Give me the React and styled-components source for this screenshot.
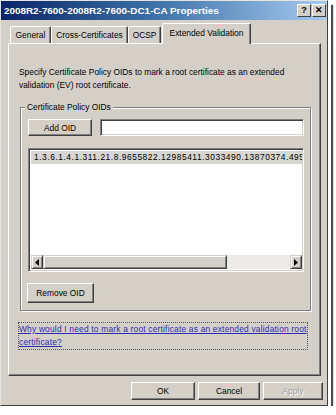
import React from "react";
import styled, { createGlobalStyle } from "styled-components";

const GlobalStyle = createGlobalStyle`
  body {
    margin: 0;
    background: #fff;
    font-family: "Liberation Sans", Arial, sans-serif;
  }
`;

const tabs = [
    { label: "General", w: 41 },
    { label: "Cross-Certificates", w: 77 },
    { label: "OCSP", w: 33 },
    { label: "Extended Validation", w: 89, active: true },
];

const oid =
    "1.3.6.1.4.1.311.21.8.9655822.12985411.3033490.13870374.4953768.95";

const App = () => {
    return (
        <>
            <GlobalStyle />
            <Window>
                <TitleBar>
                    <Title>2008R2-7600-2008R2-7600-DC1-CA Properties</Title>
                    <TitleButtons>
                        <TitleButton>?</TitleButton>
                        <TitleButton>✕</TitleButton>
                    </TitleButtons>
                </TitleBar>

                <TabRow>
                    {tabs.map((t) => (
                        <Tab key={t.label} w={t.w} active={t.active}>
                            {t.label}
                        </Tab>
                    ))}
                </TabRow>

                <Panel>
                    <Description>
                        Specify Certificate Policy OIDs to mark a root certificate as an extended
                        <br />
                        validation (EV) root certificate.
                    </Description>

                    <Group>
                        <Caption>Certificate Policy OIDs</Caption>
                        <AddRow>
                            <Button w={64} h={17}>
                                Add OID
                            </Button>
                            <TextBox />
                        </AddRow>

                        <ListBox>
                            <ListItems>
                                <ListItem>{oid}</ListItem>
                            </ListItems>
                            <HScroll>
                                <ArrowButton>
                                    <svg width="4" height="7" viewBox="0 0 4 7">
                                        <path d="M4 0 L0 3.5 L4 7 Z" fill="#000" />
                                    </svg>
                                </ArrowButton>
                                <Track>
                                    <Thumb />
                                </Track>
                                <ArrowButton>
                                    <svg width="4" height="7" viewBox="0 0 4 7">
                                        <path d="M0 0 L4 3.5 L0 7 Z" fill="#000" />
                                    </svg>
                                </ArrowButton>
                            </HScroll>
                        </ListBox>

                        <Button w={67} h={20} shift={-1}>
                            Remove OID
                        </Button>
                    </Group>

                    <HelpLink>
                        Why would I need to mark a root certificate as an extended validation root
                        <br />
                        certificate?
                    </HelpLink>
                </Panel>

                <Footer>
                    <Button w={64} h={18}>
                        OK
                    </Button>
                    <Button w={62} h={18}>
                        Cancel
                    </Button>
                    <Button w={60} h={18} disabled>
                        Apply
                    </Button>
                </Footer>
            </Window>
        </>
    );
};

export default App;

const Window = styled.div`
    width: 328px;
    height: 406px;
    box-sizing: border-box;
    background: #d4d0c8;
    border: 1px solid;
    border-color: #e6e4de #404040 #404040 #e6e4de;
    box-shadow: 3px 3px 0 #fff, 5px 5px 1px #4a4a4a;
    display: flex;
    flex-direction: column;
    font-size: 8.4px;
    color: #000;
`;

const TitleBar = styled.div`
    height: 19px;
    display: flex;
    align-items: center;
    justify-content: space-between;
    padding: 0 1px 0 3px;
    background: linear-gradient(to right, #0a246a 0%, #3a6ea5 45%, #a6caf0 100%);
`;

const Title = styled.span`
    color: #fff;
    font-weight: bold;
    font-size: 9.9px;
`;

const TitleButtons = styled.div`
    display: flex;
    gap: 1px;
`;

const TitleButton = styled.div`
    width: 12px;
    height: 11px;
    display: flex;
    align-items: center;
    justify-content: center;
    background: #d4d0c8;
    border: 1px solid;
    border-color: #fff #404040 #404040 #fff;
    font-size: 9px;
    font-weight: bold;
    line-height: 1;
`;

const TabRow = styled.div`
    height: 23px;
    display: flex;
    align-items: flex-end;
    padding-left: 9px;
    position: relative;
    z-index: 1;
`;

const Tab = styled.div`
    width: ${(p) => p.w}px;
    height: ${(p) => (p.active ? 21 : 17)}px;
    box-sizing: border-box;
    margin-bottom: ${(p) => (p.active ? -1 : 0)}px;
    margin-left: ${(p) => (p.active ? 1 : 0)}px;
    padding-top: ${(p) => (p.active ? 4 : 3)}px;
    text-align: center;
    background: #d4d0c8;
    border: 1px solid;
    border-bottom: none;
    border-color: #fff #404040 transparent #fff;
    box-shadow: inset -1px 0 0 #808080;
    border-radius: 2px 2px 0 0;
    white-space: nowrap;
`;

const Panel = styled.div`
    width: 313px;
    height: 333px;
    box-sizing: border-box;
    margin-left: 7px;
    border: 1px solid;
    border-color: #fff #404040 #404040 #fff;
    box-shadow: inset -1px -1px 0 #808080;
    padding: 22px 9px 0 11px;
`;

const Description = styled.div`
    line-height: 13px;
    margin-left: -1px;
    white-space: nowrap;
`;

const Group = styled.div`
    position: relative;
    margin-top: 15px;
    height: 204px;
    box-sizing: border-box;
    border: 1px solid #808080;
    box-shadow: inset 1px 1px 0 #fff, 1px 1px 0 #fff;
    padding: 11px 6px 0 7px;
`;

const Caption = styled.span`
    position: absolute;
    top: -6px;
    left: 4px;
    padding: 0 2px;
    background: #d4d0c8;
    line-height: 11px;
`;

const Button = styled.div`
    width: ${(p) => p.w}px;
    height: ${(p) => p.h}px;
    margin-left: ${(p) => p.shift || 0}px;
    box-sizing: border-box;
    display: flex;
    align-items: center;
    justify-content: center;
    background: #d4d0c8;
    border: 1px solid;
    border-color: #fff #404040 #404040 #fff;
    box-shadow: inset -1px -1px 0 #808080;
    color: ${(p) => (p.disabled ? "#a0a0a0" : "#000")};
    text-shadow: ${(p) => (p.disabled ? "1px 1px 0 #fff" : "none")};
    flex-shrink: 0;
`;

const AddRow = styled.div`
    display: flex;
    gap: 8px;
    align-items: center;
`;

const TextBox = styled.div`
    flex: 1;
    height: 17px;
    box-sizing: border-box;
    background: #fff;
    border: 1px solid;
    border-color: #808080 #fff #fff #808080;
    box-shadow: inset 1px 1px 0 #404040, inset -1px -1px 0 #d4d0c8;
`;

const ListBox = styled.div`
    margin-top: 12px;
    margin-bottom: 11px;
    height: 124px;
    box-sizing: border-box;
    background: #fff;
    border: 1px solid;
    border-color: #808080 #fff #fff #808080;
    box-shadow: inset 1px 1px 0 #404040, inset -1px -1px 0 #d4d0c8;
    padding: 1px;
    display: flex;
    flex-direction: column;
    overflow: hidden;
`;

const ListItems = styled.div`
    flex: 1;
    padding: 1px 0 0 1px;
    overflow: hidden;
`;

const ListItem = styled.div`
    background: #d8d6d0;
    line-height: 13px;
    padding-left: 3px;
    letter-spacing: 0.55px;
    white-space: nowrap;
`;

const HScroll = styled.div`
    height: 14px;
    display: flex;
    margin: 0 0 1px 1px;
`;

const ArrowButton = styled.div`
    width: 12px;
    height: 14px;
    box-sizing: border-box;
    display: flex;
    align-items: center;
    justify-content: center;
    background: #d4d0c8;
    border: 1px solid;
    border-color: #d4d0c8 #404040 #404040 #d4d0c8;
    box-shadow: inset 1px 1px 0 #fff, inset -1px -1px 0 #808080;
`;

const Track = styled.div`
    flex: 1;
    background: #ecebe8;
    display: flex;
`;

const Thumb = styled.div`
    width: 184px;
    box-sizing: border-box;
    background: #d4d0c8;
    border: 1px solid;
    border-color: #d4d0c8 #404040 #404040 #d4d0c8;
    box-shadow: inset 1px 1px 0 #fff, inset -1px -1px 0 #808080;
`;

const HelpLink = styled.div`
    display: inline-block;
    margin-top: 12px;
    margin-left: -1px;
    line-height: 13px;
    color: #2b2bb5;
    text-decoration: underline;
    letter-spacing: 0.2px;
    white-space: nowrap;
    outline: 1px dotted #555;
    outline-offset: 0;
`;

const Footer = styled.div`
    display: flex;
    justify-content: flex-end;
    gap: 3px;
    padding: 6px 4px 0 0;
`;
